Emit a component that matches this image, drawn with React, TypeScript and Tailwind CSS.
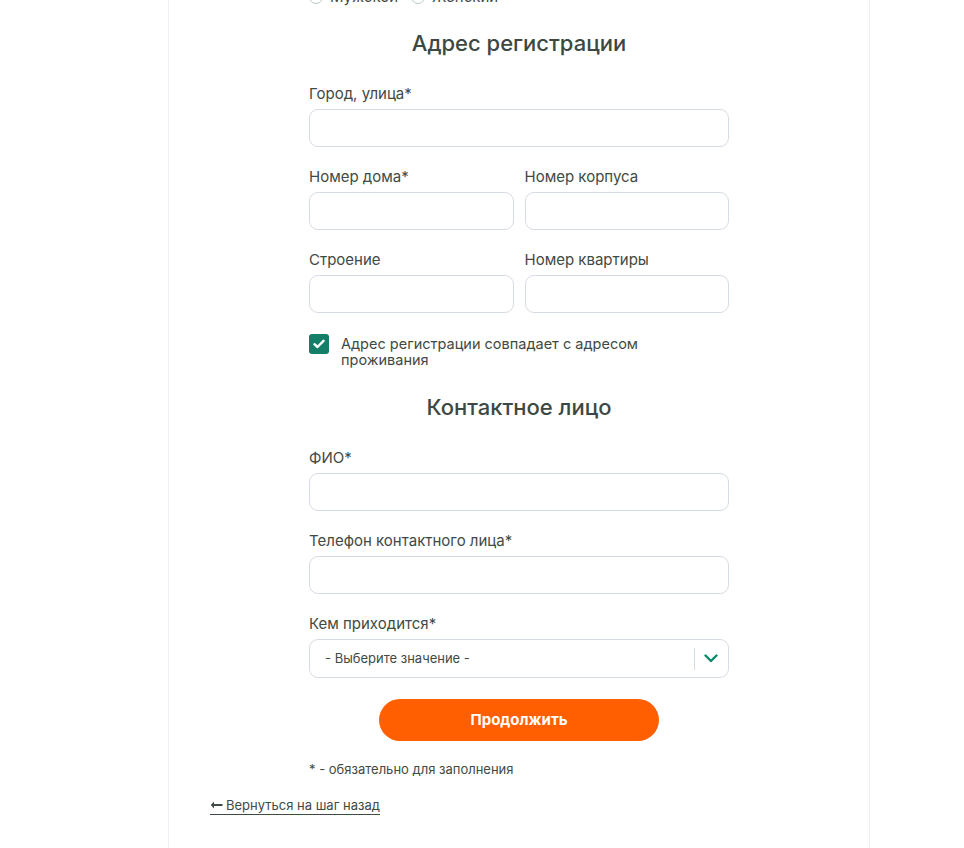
import React from "react";

const Label = ({ children }: { children: React.ReactNode }) => (
  <div className="text-[15px] leading-[18px] text-[#3f4a44] mb-[6px]">{children}</div>
);

const Input = () => (
  <div className="h-[38px] w-full rounded-[9px] border border-[#d6dce4] bg-white" />
);

export default function App() {
  return (
    <div className="min-h-[848px] bg-white" style={{ fontFamily: "Inter, 'Noto Sans', sans-serif" }}>
      <div className="ml-[168px] w-[702px] min-h-[848px] border-x border-[#eeeef7] bg-white pb-[40px]">
        <div className="mx-auto w-[420px]">
          {/* radio row cut at top */}
          <div className="-mt-[11px] flex items-center gap-[8px] h-[16px] text-[15px] text-[#3f4a44]">
            <div className="flex items-center gap-[7px]">
              <span className="inline-block h-[14px] w-[14px] rounded-full border border-[#b9ccc6]" />
              <span>Мужской</span>
            </div>
            <div className="ml-[5px] flex items-center gap-[7px]">
              <span className="inline-block h-[14px] w-[14px] rounded-full border border-[#b9ccc6]" />
              <span>Женский</span>
            </div>
          </div>

          <h2 className="mt-[24px] text-center text-[22px] leading-[28px] font-medium text-[#3d4842]">
            Адрес регистрации
          </h2>

          <div className="mt-[28px]">
            <Label>Город, улица*</Label>
            <Input />
          </div>

          <div className="mt-[21px] grid grid-cols-2 gap-x-[11px]">
            <div>
              <Label>Номер дома*</Label>
              <Input />
            </div>
            <div>
              <Label>Номер корпуса</Label>
              <Input />
            </div>
          </div>

          <div className="mt-[21px] grid grid-cols-2 gap-x-[11px]">
            <div>
              <Label>Строение</Label>
              <Input />
            </div>
            <div>
              <Label>Номер квартиры</Label>
              <Input />
            </div>
          </div>

          <div className="mt-[21px] flex items-start gap-[12px]">
            <div className="flex h-[20px] w-[20px] shrink-0 items-center justify-center rounded-[3px] bg-[#137f69]">
              <svg width="12" height="10" viewBox="0 0 12 10" fill="none">
                <path d="M1.5 5.2L4.5 8L10.5 1.8" stroke="white" strokeWidth="2.4" strokeLinecap="round" strokeLinejoin="round" />
              </svg>
            </div>
            <div className="pt-[2px] text-[14.5px] leading-[16px] text-[#3f4a44]">
              Адрес регистрации совпадает с адресом
              <br />
              проживания
            </div>
          </div>

          <h2 className="mt-[25px] text-center text-[22px] leading-[28px] font-medium text-[#3d4842]">
            Контактное лицо
          </h2>

          <div className="mt-[28px]">
            <Label>ФИО*</Label>
            <Input />
          </div>

          <div className="mt-[21px]">
            <Label>Телефон контактного лица*</Label>
            <Input />
          </div>

          <div className="mt-[21px]">
            <Label>Кем приходится*</Label>
            <div className="flex h-[39px] w-full items-center rounded-[9px] border border-[#d6dce4] bg-white">
              <span className="flex-1 pl-[15px] text-[13px] text-[#3f4a44]">- Выберите значение -</span>
              <span className="h-[22px] w-px bg-[#d6dce4]" />
              <span className="flex w-[33px] items-center justify-center pr-[2px]">
                <svg width="14" height="9" viewBox="0 0 14 9" fill="none">
                  <path d="M1.5 1.5L7 7L12.5 1.5" stroke="#0b8a6b" strokeWidth="2.4" strokeLinecap="round" strokeLinejoin="round" />
                </svg>
              </span>
            </div>
          </div>

          <div className="mt-[21px] flex justify-center">
            <button className="h-[42px] w-[280px] rounded-full bg-[#ff5f00] text-[15px] font-bold text-white">
              Продолжить
            </button>
          </div>

          <div className="mt-[20px] text-[13px] leading-[16px] text-[#3f4a44]">* - обязательно для заполнения</div>
        </div>

        <div className="ml-[41px] mt-[14px]">
          <a className="inline-flex items-center gap-[3px] border-b border-[#3f4a44] pb-[1px] text-[13px] leading-[15px] text-[#3f4a44]">
            <svg width="13" height="8" viewBox="0 0 13 8" fill="none">
              <path d="M4 0.5L0.8 4L4 7.5Z" fill="#3f4a44" />
              <path d="M3 4H12.5" stroke="#3f4a44" strokeWidth="2" />
            </svg>
            Вернуться на шаг назад
          </a>
        </div>
      </div>
    </div>
  );
}
